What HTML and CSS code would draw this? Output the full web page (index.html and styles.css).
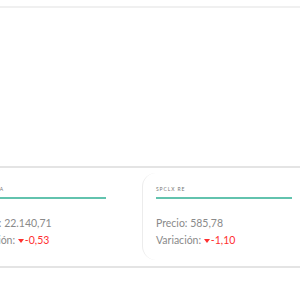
FILE: index.html
```html
<!DOCTYPE html>
<html lang="es">
<head>
  <meta charset="UTF-8">
  <meta name="viewport" content="width=device-width, initial-scale=1.0">
  <title>Indices</title>
  <link rel="stylesheet" href="styles.css">
</head>
<body>
  <div class="topbar"></div>
  <div class="chart-area"></div>

  <div class="ticker">
    <div class="cards">
      <div class="card">
        <div class="card-title">SPCLXIGPA</div>
        <div class="card-bar"></div>
        <div class="card-row">Precio: 22.140,71</div>
        <div class="card-row">Variación: <span class="down"><span class="caret"></span>-0,53</span></div>
      </div>
      <div class="card">
        <div class="card-title">SPCLX RE</div>
        <div class="card-bar"></div>
        <div class="card-row">Precio: 585,78</div>
        <div class="card-row">Variación: <span class="down"><span class="caret"></span>-1,10</span></div>
      </div>
    </div>
  </div>
</body>
</html>
```

FILE: styles.css
```css
body {
  margin: 0;
  background-color: #fff;
  font-family: Lato, "Open Sans", sans-serif;
  overflow: hidden;
}
.topbar {
  height: 6px;
  border-bottom: 2px solid #f0f0f0;
}
.chart-area {
  height: 158px;
}
.ticker {
  border-top: 2px solid #e4e4e4;
  border-bottom: 2px solid #e4e4e4;
  padding: 5px 0 6px;
  overflow: hidden;
}
.cards {
  display: flex;
  gap: 23px;
  margin-left: -44px;
}
.card {
  flex-shrink: 0;
  width: 136px;
  padding: 13px 13px 11px;
  border-left: 1px solid #ececec;
  border-radius: 14px;
}
.card-title {
  font-size: 5px;
  line-height: 6px;
  letter-spacing: 0.9px;
  color: #777;
}
.card-bar {
  height: 2px;
  margin: 5px 0 16px;
  background-color: #62c3ae;
}
.card-row {
  font-size: 10.5px;
  line-height: 17px;
  color: #8a8a8a;
}
.down {
  color: #ff2f2f;
}
.caret {
  display: inline-block;
  width: 0;
  height: 0;
  border-left: 3px solid transparent;
  border-right: 3px solid transparent;
  border-top: 4px solid #ff2f2f;
  vertical-align: middle;
  margin-right: 1px;
}
```
